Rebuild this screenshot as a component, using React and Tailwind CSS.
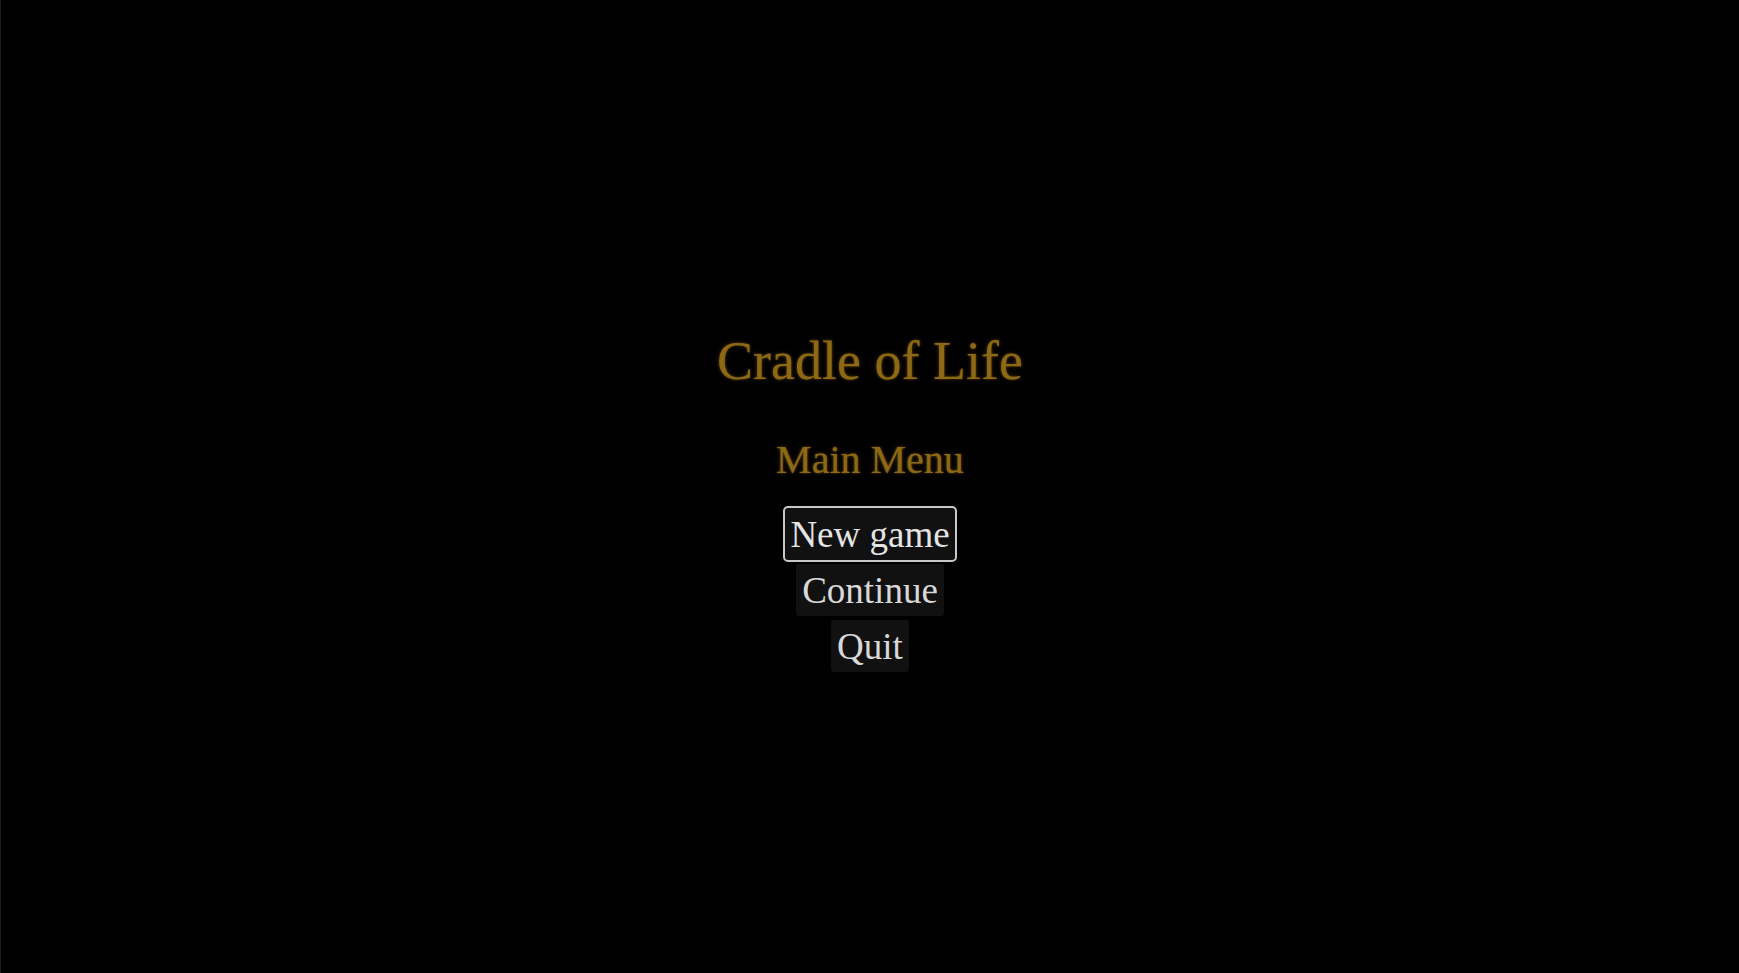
import React from 'react';

const menuItems = [
  { label: 'New game', active: true },
  { label: 'Continue' },
  { label: 'Quit' },
];

const MenuButton = ({ label, active }) => (
  <button
    type="button"
    className={
      active
        ? 'h-[52px] px-[5px] rounded-[3px] bg-[#111111] text-[#e4e4e4] text-[37px] leading-none outline-2 outline-[#c8c8c8]'
        : 'h-[52px] px-[6px] rounded-[3px] bg-[#111111] text-[#d8d8d8] text-[37px] leading-none'
    }
  >
    {label}
  </button>
);

const App = () => {
  return (
    <div
      className="w-full h-[973px] bg-black border-l border-[#1a1a2a] flex flex-col items-center pt-[329px]"
      style={{ fontFamily: '"Liberation Serif", "DejaVu Serif", serif' }}
    >
      <h1 className="text-[54px] leading-[64px] text-[#8d6914] [text-shadow:0_0_2px_#4a3510,0_0_4px_#3a2a0c,0_0_1px_#2a1d06]">
        Cradle of Life
      </h1>

      <h2 className="mt-[43px] text-[40px] leading-[48px] text-[#8d6914] [text-shadow:0_0_2px_#4a3510,0_0_4px_#3a2a0c,0_0_1px_#2a1d06]">
        Main Menu
      </h2>

      {/* menu entries */}
      <nav className="mt-[24px] flex flex-col items-center gap-[4px]">
        {menuItems.map((item) => (
          <MenuButton key={item.label} label={item.label} active={item.active} />
        ))}
      </nav>
    </div>
  );
};

export default App;
